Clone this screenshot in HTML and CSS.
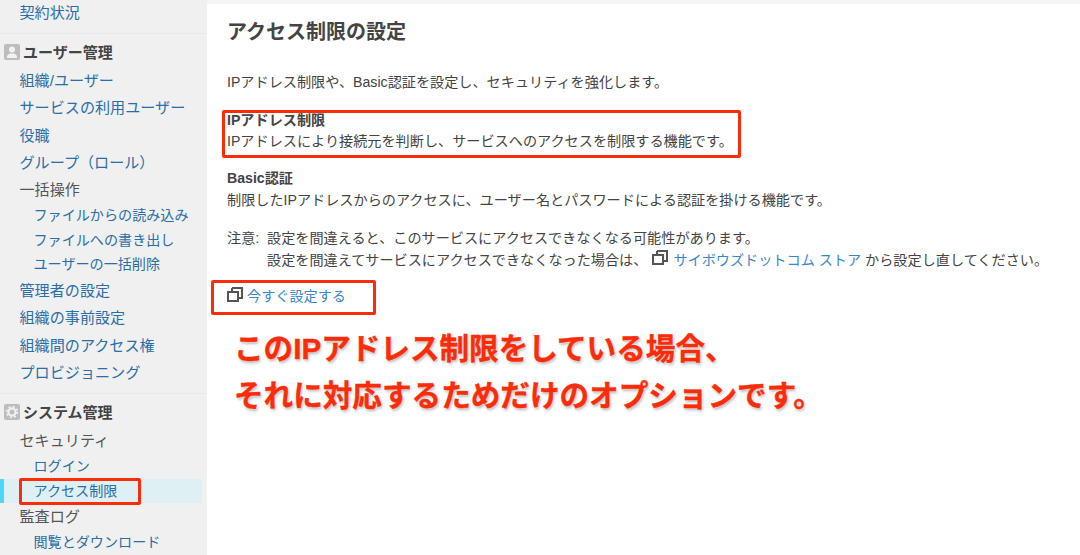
FILE: index.html
```html
<!DOCTYPE html>
<html lang="ja">
<head>
    <meta charset="UTF-8">
    <meta name="viewport" content="width=device-width, initial-scale=1.0">
    <title>アクセス制限の設定</title>
    <link rel="stylesheet" href="styles.css">
</head>

<body>
    <div class="page">
        <nav class="side">
            <a class="item first">契約状況</a>
            <div class="group">
                <h3>
                    <span class="badge">
                        <svg width="16" height="16" viewBox="0 0 16 16"><circle cx="8" cy="5.6" r="3" fill="#f2f2f2"/><path d="M2.800 14c0-3.200 2-4.300 3.600-4.600h3.200c1.600.3 3.600 1.400 3.600 4.600z" fill="#f2f2f2"/></svg>
                    </span>ユーザー管理
                </h3>
                <a class="item">組織/ユーザー</a>
                <a class="item">サービスの利用ユーザー</a>
                <a class="item">役職</a>
                <a class="item">グループ（ロール）</a>
                <span class="item plain">一括操作</span>
                <a class="sub">ファイルからの読み込み</a>
                <a class="sub">ファイルへの書き出し</a>
                <a class="sub">ユーザーの一括削除</a>
                <a class="item">管理者の設定</a>
                <a class="item">組織の事前設定</a>
                <a class="item">組織間のアクセス権</a>
                <a class="item">プロビジョニング</a>
            </div>
            <div class="group">
                <h3>
                    <span class="badge">
                        <svg width="16" height="16" viewBox="0 0 16 16"><circle cx="8" cy="8" r="3.600" fill="none" stroke="#f2f2f2" stroke-width="2.200"/><circle cx="8" cy="8" r="5.400" fill="none" stroke="#f2f2f2" stroke-width="1.600" stroke-dasharray="2 2.240"/></svg>
                    </span>システム管理
                </h3>
                <span class="item plain">セキュリティ</span>
                <a class="sub">ログイン</a>
                <a class="sub current"><span class="mark">アクセス制限</span></a>
                <span class="item plain short">監査ログ</span>
                <a class="sub">閲覧とダウンロード</a>
            </div>
        </nav>

        <main class="main">
            <h1>アクセス制限の設定</h1>
            <p class="lead">IPアドレス制限や、Basic認証を設定し、セキュリティを強化します。</p>

            <div class="red-box ip">
                <b>IPアドレス制限</b>
                <p>IPアドレスにより接続元を判断し、サービスへのアクセスを制限する機能です。</p>
            </div>

            <div class="basic">
                <b>Basic認証</b>
                <p>制限したIPアドレスからのアクセスに、ユーザー名とパスワードによる認証を掛ける機能です。</p>
            </div>

            <div class="note">
                <span class="note-label">注意:</span>
                <div>
                    <p>設定を間違えると、このサービスにアクセスできなくなる可能性があります。</p>
                    <p>設定を間違えてサービスにアクセスできなくなった場合は、<svg class="win store" width="16" height="16" viewBox="0 0 16 16"><path d="M5 1h10v10h-3.500M5 1v3.500" fill="none" stroke="#555" stroke-width="2"/><rect x="1" y="5" width="10" height="9" fill="none" stroke="#555" stroke-width="2"/></svg><a>サイボウズドットコム ストア</a> から設定し直してください。</p>
                </div>
            </div>

            <div class="red-box now">
                <svg class="win" width="16" height="16" viewBox="0 0 16 16"><path d="M5 1h10v10h-3.500M5 1v3.500" fill="none" stroke="#555" stroke-width="2"/><rect x="1" y="5" width="10" height="9" fill="none" stroke="#555" stroke-width="2"/></svg>
                <a>今すぐ設定する</a>
            </div>

            <p class="callout">このIPアドレス制限をしている場合、<br>それに対応するためだけのオプションです。</p>
        </main>
    </div>
</body>

</html>
```

FILE: styles.css
```css
* {
    box-sizing: border-box;
}

html, body {
    margin: 0;
    height: 100%;
    overflow: hidden;
}

body {
    font-family: "Liberation Sans", "Noto Sans CJK JP", sans-serif;
    color: #444;
    background: #fff;
}

h1, h3, p {
    margin: 0;
}

.page {
    display: flex;
    height: 555px;
}

/* left menu */
.side {
    width: 207px;
    flex: none;
    background: #f0f0f0;
    font-size: 15.1px;
}

.group {
    border-top: 1px solid #e8e8e8;
    padding-top: 4px;
    margin-top: 7px;
}

.group h3 {
    display: flex;
    align-items: center;
    height: 27px;
    margin-bottom: 2px;
    padding-left: 4px;
    font-size: 15px;
    font-weight: bold;
    color: #444;
}

.badge {
    width: 16px;
    height: 16px;
    margin-right: 3px;
    background: #bdbdbd;
    border-radius: 2px;
    display: block;
}

.badge svg {
    display: block;
}

.item {
    display: block;
    height: 27.3px;
    line-height: 27px;
    padding-left: 19.5px;
    color: #2a6ea8;
    white-space: nowrap;
}

.item.first {
    height: 26px;
    line-height: 25px;
}

.item.plain {
    color: #555;
}

.item.short {
    height: 26.5px;
}

.sub {
    display: block;
    height: 24.5px;
    line-height: 25px;
    padding-left: 33.5px;
    font-size: 14.1px;
    color: #2a6ea8;
    white-space: nowrap;
}

.current {
    position: relative;
    width: 202px;
    background: #dff0f5;
    border-left: 4px solid #4dd6f5;
    padding-left: 29.5px;
}

.mark {
    position: absolute;
    left: 15px;
    top: -1px;
    width: 122px;
    height: 27px;
    padding-left: 11.5px;
    border: 3px solid #fa2c0a;
    border-radius: 2px;
    line-height: 20px;
}

/* main area */
.main {
    flex: 1;
    padding: 19px 0 0 20px;
    border-top: 4px solid #f5f5f5;
    font-size: 14.15px;
    line-height: 20px;
    white-space: nowrap;
}

.main a {
    color: #3b86cc;
}

.main p {
    color: #444;
}

.main h1 {
    font-size: 20px;
    line-height: 18px;
    color: #444;
}

.lead {
    margin-top: 31px;
}

.red-box {
    border: 3px solid #fa2c0a;
    border-radius: 2px;
}

.ip {
    width: 519px;
    height: 48px;
    margin: 18px 0 0 -5px;
    padding: 0 0 0 2px;
    line-height: 21px;
}

.ip b {
    display: block;
    margin: -3px 0 0;
    color: #444;
}

.basic b {
    display: block;
    margin-bottom: 2px;
    color: #444;
}

.basic {
    margin-top: 10px;
}

.basic p {
    line-height: 21px;
}

.note {
    display: flex;
    margin-top: 16px;
    line-height: 22px;
}

.note-label {
    width: 40px;
}

.win {
    vertical-align: -1px;
    margin: 0 2px 0 3px;
}

.store {
    margin: 0 5px;
}

.now {
    display: flex;
    align-items: center;
    width: 165px;
    height: 35px;
    margin: 9px 0 0 -16px;
    padding: 0 0 4px 13px;
}

.now .win {
    margin: -2px 4px 0 0;
}

.callout {
    margin: 10px 0 0 7px;
    font-size: 29.6px;
    line-height: 47px;
    font-weight: bold;
    color: #fa2c0a !important;
    -webkit-text-stroke: .4px #fa2c0a;
    text-shadow: 0 0 2px #fff, 1px 2px 3px rgba(0, 0, 0, .3);
}
```
